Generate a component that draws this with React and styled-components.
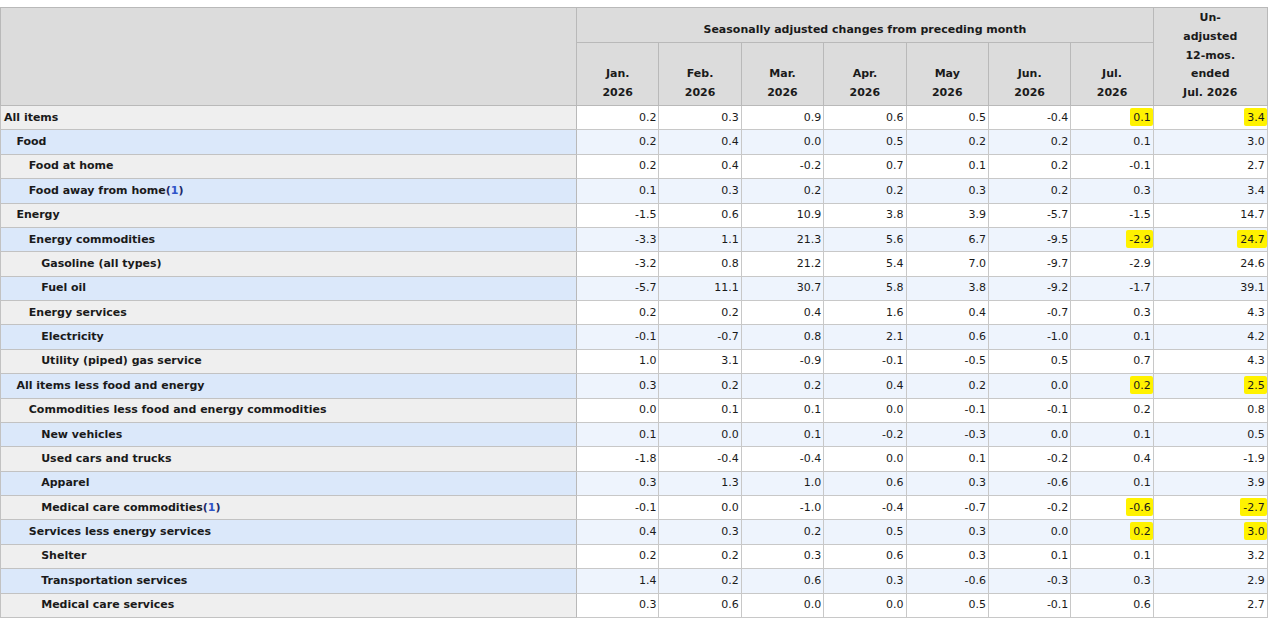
import React from "react";
import styled, { createGlobalStyle } from "styled-components";

const Global = createGlobalStyle`
  html, body { margin: 0; padding: 0; background: #ffffff; }
  body { font-family: "DejaVu Sans", Verdana, sans-serif; }
`;

const Page = styled.div`
  padding-top: 7px;
  width: 1267px;
`;

const Table = styled.table`
  border-collapse: collapse;
  table-layout: fixed;
  width: 1267px;
  font-family: "DejaVu Sans", Verdana, sans-serif;
  font-size: 11px;
  color: #1a1a1a;
  border: 1px solid #b9b9b9;
`;

const HeadCell = styled.th`
  background: #dcdcdc;
  border: 1px solid #b9b9b9;
  font-weight: bold;
  font-size: 11px;
  line-height: 18.8px;
  text-align: center;
  vertical-align: bottom;
  padding: 0 2px ${(p) => (p.$pb != null ? p.$pb : 2)}px;
  height: ${(p) => p.$h}px;
  box-sizing: border-box;
`;

const Row = styled.tr`
  height: 24.38px;
`;

const LabelCell = styled.th`
  background: ${(p) => (p.$alt ? "#dbe8fa" : "#efefef")};
  border: 1px solid #c2c2c2;
  border-right-color: #b9b9b9;
  text-align: left;
  font-weight: bold;
  font-size: 11px;
  padding: 0 0 1px ${(p) => 3 + p.$level * 12.4}px;
  white-space: nowrap;
  vertical-align: middle;
`;

const DataCell = styled.td`
  background: ${(p) => (p.$alt ? "#eef4fd" : "#ffffff")};
  border: 1px solid #c8c8c8;
  text-align: right;
  padding: 0 2px 1px 0;
  font-size: 11px;
  vertical-align: middle;
  white-space: nowrap;
`;

const Mark = styled.span`
  background: #fff200;
  border-radius: 2px;
  padding: 3px 2px 2px 3px;
  margin-right: -2px;
`;

const Note = styled.span`
  color: #1d2a6b;
  font-weight: bold;
`;

const NoteNum = styled.span`
  color: #2f55c9;
`;

const months = ["Jan.", "Feb.", "Mar.", "Apr.", "May", "Jun.", "Jul."];

const rows = [
  [0, "All items", ["0.2", "0.3", "0.9", "0.6", "0.5", "-0.4", "0.1"], "3.4", true],
  [1, "Food", ["0.2", "0.4", "0.0", "0.5", "0.2", "0.2", "0.1"], "3.0"],
  [2, "Food at home", ["0.2", "0.4", "-0.2", "0.7", "0.1", "0.2", "-0.1"], "2.7"],
  [2, "Food away from home", ["0.1", "0.3", "0.2", "0.2", "0.3", "0.2", "0.3"], "3.4", false, true],
  [1, "Energy", ["-1.5", "0.6", "10.9", "3.8", "3.9", "-5.7", "-1.5"], "14.7"],
  [2, "Energy commodities", ["-3.3", "1.1", "21.3", "5.6", "6.7", "-9.5", "-2.9"], "24.7", true],
  [3, "Gasoline (all types)", ["-3.2", "0.8", "21.2", "5.4", "7.0", "-9.7", "-2.9"], "24.6"],
  [3, "Fuel oil", ["-5.7", "11.1", "30.7", "5.8", "3.8", "-9.2", "-1.7"], "39.1"],
  [2, "Energy services", ["0.2", "0.2", "0.4", "1.6", "0.4", "-0.7", "0.3"], "4.3"],
  [3, "Electricity", ["-0.1", "-0.7", "0.8", "2.1", "0.6", "-1.0", "0.1"], "4.2"],
  [3, "Utility (piped) gas service", ["1.0", "3.1", "-0.9", "-0.1", "-0.5", "0.5", "0.7"], "4.3"],
  [1, "All items less food and energy", ["0.3", "0.2", "0.2", "0.4", "0.2", "0.0", "0.2"], "2.5", true],
  [2, "Commodities less food and energy commodities", ["0.0", "0.1", "0.1", "0.0", "-0.1", "-0.1", "0.2"], "0.8"],
  [3, "New vehicles", ["0.1", "0.0", "0.1", "-0.2", "-0.3", "0.0", "0.1"], "0.5"],
  [3, "Used cars and trucks", ["-1.8", "-0.4", "-0.4", "0.0", "0.1", "-0.2", "0.4"], "-1.9"],
  [3, "Apparel", ["0.3", "1.3", "1.0", "0.6", "0.3", "-0.6", "0.1"], "3.9"],
  [3, "Medical care commodities", ["-0.1", "0.0", "-1.0", "-0.4", "-0.7", "-0.2", "-0.6"], "-2.7", true, true],
  [2, "Services less energy services", ["0.4", "0.3", "0.2", "0.5", "0.3", "0.0", "0.2"], "3.0", true],
  [3, "Shelter", ["0.2", "0.2", "0.3", "0.6", "0.3", "0.1", "0.1"], "3.2"],
  [3, "Transportation services", ["1.4", "0.2", "0.6", "0.3", "-0.6", "-0.3", "0.3"], "2.9"],
  [3, "Medical care services", ["0.3", "0.6", "0.0", "0.0", "0.5", "-0.1", "0.6"], "2.7"],
];

export default function App() {
  return (
    <>
      <Global />
      <Page>
        <Table>
          <colgroup>
            <col style={{ width: 576 }} />
            {months.map((m) => (
              <col key={m} style={{ width: 82.4 }} />
            ))}
            <col style={{ width: 114 }} />
          </colgroup>
          <thead>
            <tr>
              <HeadCell rowSpan={2} $h={35} />
              <HeadCell colSpan={7} $h={35} $pb={2}>
                Seasonally adjusted changes from preceding month
              </HeadCell>
              <HeadCell rowSpan={2} $h={35}>
                Un-
                <br />
                adjusted
                <br />
                12-mos.
                <br />
                ended
                <br />
                Jul. 2026
              </HeadCell>
            </tr>
            <tr>
              {months.map((m) => (
                <HeadCell key={m} $h={63}>
                  {m}
                  <br />
                  2026
                </HeadCell>
              ))}
            </tr>
          </thead>
          <tbody>
            {rows.map(([level, label, vals, annual, hl, note], i) => {
              const alt = i % 2 === 1;
              return (
                <Row key={label}>
                  <LabelCell $level={level} $alt={alt}>
                    {label}
                    {note && (
                      <Note>
                        (<NoteNum>1</NoteNum>)
                      </Note>
                    )}
                  </LabelCell>
                  {vals.map((v, j) => (
                    <DataCell key={j} $alt={alt}>
                      {hl && j === 6 ? <Mark>{v}</Mark> : v}
                    </DataCell>
                  ))}
                  <DataCell $alt={alt}>{hl ? <Mark>{annual}</Mark> : annual}</DataCell>
                </Row>
              );
            })}
          </tbody>
        </Table>
      </Page>
    </>
  );
}
